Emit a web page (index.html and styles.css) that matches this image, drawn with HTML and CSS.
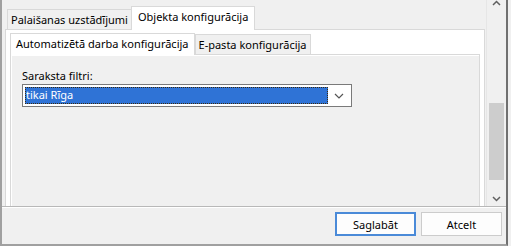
FILE: index.html
```html
<!DOCTYPE html>
<html lang="lv">
<head>
    <meta charset="UTF-8">
    <title>Objekta konfigurācija</title>
    <link rel="stylesheet" href="styles.css">
</head>
<body>
    <div class="window">
        <div class="main">
            <div class="scroll-area">
                <div class="tabs outer-tabs">
                    <div class="tab">Palaišanas uzstādījumi</div>
                    <div class="tab active">Objekta konfigurācija</div>
                </div>
                <div class="outer-panel">
                    <div class="tabs inner-tabs">
                        <div class="tab active">Automatizētā darba konfigurācija</div>
                        <div class="tab">E-pasta konfigurācija</div>
                    </div>
                    <div class="inner-panel">
                        <label class="field-label">Saraksta filtri:</label>
                        <div class="combo">
                            <span class="combo-value">tikai Rīga</span>
                            <svg class="combo-arrow" width="10" height="6" viewBox="0 0 10 6">
                                <path d="M1 1 L5 5 L9 1" fill="none" stroke="#555" stroke-width="1.2"/>
                            </svg>
                        </div>
                    </div>
                </div>
            </div>
            <div class="scrollbar">
                <svg class="arrow" width="9" height="6" viewBox="0 0 9 6">
                    <path d="M1 5 L4.5 1.5 L8 5" fill="none" stroke="#606060" stroke-width="1.5"/>
                </svg>
                <div class="track">
                    <div class="thumb"></div>
                </div>
                <svg class="arrow" width="9" height="6" viewBox="0 0 9 6">
                    <path d="M1 1 L4.5 4.5 L8 1" fill="none" stroke="#606060" stroke-width="1.5"/>
                </svg>
            </div>
        </div>
        <div class="footer">
            <button class="btn default">Saglabāt</button>
            <button class="btn">Atcelt</button>
        </div>
    </div>
</body>
</html>
```

FILE: styles.css
```css
*{
    margin: 0;
    padding: 0;
    box-sizing: border-box;
}
body{
    background-color: #f0f0f0;
    font-family: "Noto Sans", "DejaVu Sans", sans-serif;
    font-size: 11px;
    color: #000;
    width: 511px;
    height: 246px;
    overflow: hidden;
}

.window{
    height: 246px;
    width: 508px;
    border-left: 2px solid #a0a0a0;
    border-right: 2px solid #707070;
    border-bottom: 2px solid #a0a0a0;
    display: flex;
    flex-direction: column;
}

.main{
    height: 207px;
    display: flex;
    border-bottom: 1px solid #b8b8b8;
}
.scroll-area{
    flex: 1;
    padding: 6px 0 0 3px;
    overflow: hidden;
}

.tabs{
    display: flex;
    align-items: flex-end;
    position: relative;
    z-index: 1;
}
.tab{
    border: 1px solid #d9d9d9;
    border-bottom: none;
    background-color: #f0f0f0;
    padding: 0 3px;
    height: 20px;
    line-height: 19px;
    white-space: nowrap;
}
.tab.active{
    background-color: #fff;
    height: 24px;
    margin-bottom: -1px;
    padding: 0 6px;
}
.outer-tabs{
    padding-left: 2px;
}
.outer-tabs .tab:first-child{
    margin-right: -1px;
}

.outer-panel{
    background-color: #fff;
    border: 1px solid #d9d9d9;
    height: 200px;
    margin-right: 1px;
    padding: 3px 4px 0 4px;
}
.inner-tabs .tab.active{
    padding: 0 5px;
    height: 22px;
}

.inner-panel{
    background-color: #f0f0f0;
    border: 1px solid #d9d9d9;
    box-shadow: inset 1px 1px #fff;
    height: 160px;
    padding: 14px 10px 0 11px;
}
.field-label{
    display: block;
    line-height: 14px;
    margin-bottom: 1px;
}
.combo{
    width: 330px;
    height: 23px;
    border: 1px solid #7a7a7a;
    background-color: #fff;
    display: flex;
    align-items: center;
    padding: 2px;
}
.combo-value{
    flex: 1;
    height: 17px;
    line-height: 16px;
    background-color: #2f73d6;
    color: #fff;
    padding-left: 1px;
    outline: 1px dotted #3a2a10;
    outline-offset: -1px;
    margin-right: 6px;
}
.combo-arrow{
    margin-right: 5px;
}

.scrollbar{
    width: 20px;
    display: flex;
    flex-direction: column;
    align-items: center;
    background-color: #f0f0f0;
    border-left: 1px solid #e6e6e6;
    padding: 0 0 4px 0;
}
.track{
    flex: 1;
    width: 100%;
    padding: 97px 2px 14px 2px;
}
.thumb{
    height: 77px;
    background-color: #cdcdcd;
}

.footer{
    flex: 1;
    display: flex;
    justify-content: flex-end;
    align-items: flex-start;
    gap: 5px;
    padding: 4px 4px 0 0;
    border-top: 1px solid #fff;
}
.btn{
    width: 81px;
    height: 24px;
    font-family: inherit;
    font-size: 11px;
    background-color: #fdfdfd;
    border: 1px solid #cccccc;
}
.btn.default{
    border: 2px solid #4a8ad8;
}
```
